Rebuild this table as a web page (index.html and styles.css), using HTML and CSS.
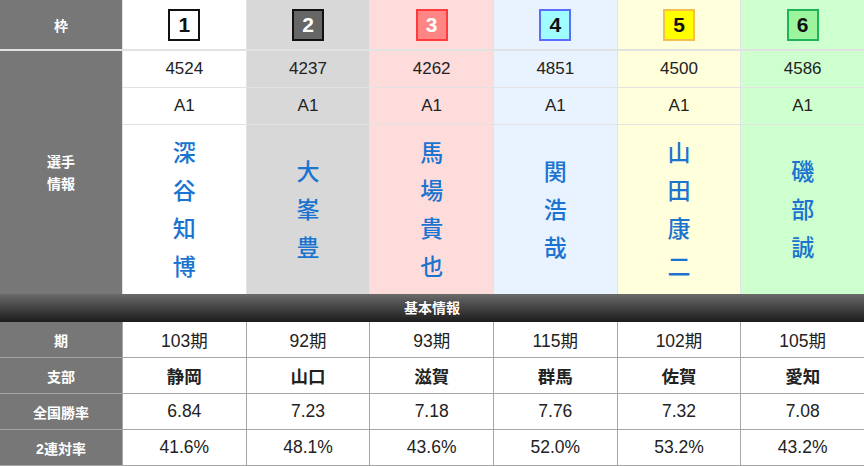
FILE: index.html
```html
<!DOCTYPE html>
<html lang="ja">
<head>
    <meta charset="UTF-8">
    <meta name="viewport" content="width=device-width, initial-scale=1.0">
    <title>出走表</title>
    <link rel="stylesheet" href="styles.css">
</head>
<body>
    <div class="racer-table">
        <div class="label frame-row">枠</div>
        <div class="cell frame-row c1"><span class="waku w1">1</span></div>
        <div class="cell frame-row c2"><span class="waku w2">2</span></div>
        <div class="cell frame-row c3"><span class="waku w3">3</span></div>
        <div class="cell frame-row c4"><span class="waku w4">4</span></div>
        <div class="cell frame-row c5"><span class="waku w5">5</span></div>
        <div class="cell frame-row c6"><span class="waku w6">6</span></div>

        <div class="label info-label">選手<br>情報</div>
        <div class="cell c1">4524</div>
        <div class="cell c2">4237</div>
        <div class="cell c3">4262</div>
        <div class="cell c4">4851</div>
        <div class="cell c5">4500</div>
        <div class="cell c6">4586</div>

        <div class="cell c1">A1</div>
        <div class="cell c2">A1</div>
        <div class="cell c3">A1</div>
        <div class="cell c4">A1</div>
        <div class="cell c5">A1</div>
        <div class="cell c6">A1</div>

        <div class="cell name c1">深<br>谷<br>知<br>博</div>
        <div class="cell name c2">大<br>峯<br>豊</div>
        <div class="cell name c3">馬<br>場<br>貴<br>也</div>
        <div class="cell name c4">関<br>浩<br>哉</div>
        <div class="cell name c5">山<br>田<br>康<br>二</div>
        <div class="cell name c6">磯<br>部<br>誠</div>
    </div>

    <div class="section-bar">基本情報</div>

    <div class="basic-table">
        <div class="label">期</div>
        <div class="val">103期</div>
        <div class="val">92期</div>
        <div class="val">93期</div>
        <div class="val">115期</div>
        <div class="val">102期</div>
        <div class="val">105期</div>

        <div class="label">支部</div>
        <div class="val bold">静岡</div>
        <div class="val bold">山口</div>
        <div class="val bold">滋賀</div>
        <div class="val bold">群馬</div>
        <div class="val bold">佐賀</div>
        <div class="val bold">愛知</div>

        <div class="label">全国勝率</div>
        <div class="val">6.84</div>
        <div class="val">7.23</div>
        <div class="val">7.18</div>
        <div class="val">7.76</div>
        <div class="val">7.32</div>
        <div class="val">7.08</div>

        <div class="label">2連対率</div>
        <div class="val">41.6%</div>
        <div class="val">48.1%</div>
        <div class="val">43.6%</div>
        <div class="val">52.0%</div>
        <div class="val">53.2%</div>
        <div class="val">43.2%</div>
    </div>
</body>
</html>
```

FILE: styles.css
```css
body {
    margin: 0;
    font-family: "Liberation Sans", "Noto Sans CJK JP", sans-serif;
    color: #222;
    background-color: #fff;
}
.racer-table {
    display: grid;
    grid-template-columns: 122px repeat(6, 1fr);
    grid-template-rows: 50px 36px 36px 169px;
    column-gap: 1px;
    row-gap: 1px;
    background-color: #e2e2e2;
}
.label {
    background-color: #777;
    color: #fff;
    font-size: 14px;
    font-weight: bold;
    display: flex;
    align-items: center;
    justify-content: center;
    text-align: center;
}
.info-label {
    grid-row: 2 / span 3;
    line-height: 22px;
}
.cell {
    display: flex;
    align-items: center;
    justify-content: center;
    font-size: 17px;
}
.frame-row {
    border-bottom: 1px solid #e2e2e2;
}
.c1 { background-color: #fff; }
.c2 { background-color: #d8d8d8; }
.c3 { background-color: #ffdcdc; }
.c4 { background-color: #e8f3ff; }
.c5 { background-color: #ffffdc; }
.c6 { background-color: #ceffce; }
.waku {
    width: 28px;
    height: 28px;
    border: 2px solid #111;
    font-size: 21px;
    font-weight: bold;
    line-height: 28px;
    text-align: center;
    margin-top: 1px;
}
.w1 { background-color: #fff; color: #111; }
.w2 { background-color: #666; color: #fff; }
.w3 { background-color: #ff8585; color: #fff; border-color: #ff3b3b; }
.w4 { background-color: #9ffcff; color: #111; border-color: #5b6cff; }
.w5 { background-color: #ffff00; color: #111; border-color: #f5c04a; }
.w6 { background-color: #9cf59c; color: #111; border-color: #1fb35a; }
.name {
    font-family: "Noto Sans CJK JP", sans-serif;
    font-size: 23px;
    font-weight: 500;
    line-height: 38px;
    color: #1a74d0;
    text-align: center;
    padding-bottom: 3px;
}
.section-bar {
    height: 28px;
    line-height: 28px;
    background: linear-gradient(#6a6a6a, #1c1c1c);
    color: #fff;
    font-size: 14px;
    font-weight: bold;
    text-align: center;
    text-shadow: 0 0 1px rgba(0, 0, 0, 0.6);
}
.basic-table {
    display: grid;
    grid-template-columns: 122px repeat(6, 1fr);
    grid-auto-rows: 35px;
    column-gap: 1px;
    row-gap: 1px;
    background-color: #a6a6a6;
    border-bottom: 1px solid #a6a6a6;
}
.val {
    background-color: #fff;
    display: flex;
    align-items: center;
    justify-content: center;
    font-size: 17.5px;
}
.bold {
    font-weight: bold;
}
```
